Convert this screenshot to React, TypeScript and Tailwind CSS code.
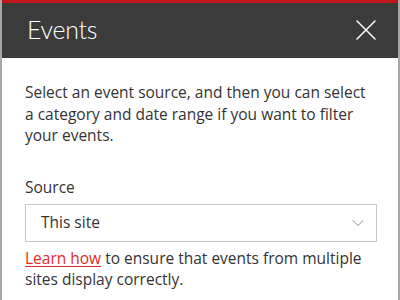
import { ChevronDown, X } from "lucide-react";

export default function App() {
  return (
    <div
      className="w-[400px] h-[300px] overflow-hidden bg-white border-l-2 border-r-2 border-[#a6a6a6] flex flex-col"
      style={{ fontFamily: '"Open Sans", "Noto Sans", sans-serif' }}
    >
      {/* Panel header */}
      <div className="h-[3px] bg-[#c4141c] -mx-[2px]" />
      <div className="h-[55px] bg-[#3b3b3b] flex items-center justify-between pl-[25px] pr-[14px]">
        <h2
          className="text-[25px] font-light text-white leading-none -mt-[2px] tracking-[-0.3px]"
          style={{ fontFamily: 'Lato, "Open Sans", sans-serif' }}
        >
          Events
        </h2>
        <button type="button" className="text-white -mt-[2px]">
          <X size={36} strokeWidth={1} />
        </button>
      </div>

      {/* Body */}
      <div className="px-[23px] pt-[24px] text-[#333333]">
        <p className="text-[15.5px] leading-[21.5px] pr-[6px]">
          Select an event source, and then you can select a category and date range if you want to filter your events.
        </p>

        <label className="block mt-[30px] text-[15.5px] leading-[21px]">Source</label>
        <div className="mt-[6px] h-[38px] w-[352px] border border-[#c8c8c8] flex items-center justify-between pl-[15px] pr-[8px]">
          <span className="text-[15.5px]">This site</span>
          <ChevronDown size={20} strokeWidth={1} className="text-[#767676]" />
        </div>

        <p className="mt-[6px] text-[15.5px] leading-[21px]">
          <a href="#" className="text-[#e22a2a] underline underline-offset-2">Learn how</a> to ensure that events from multiple sites display correctly.
        </p>
      </div>
    </div>
  );
}
